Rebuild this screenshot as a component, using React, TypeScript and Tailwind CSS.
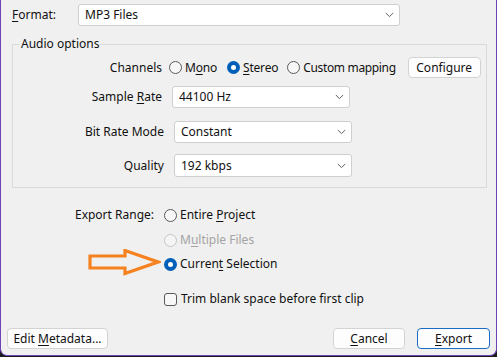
import React from "react";

const U = ({ children }: { children: React.ReactNode }) => <span className="underline underline-offset-2">{children}</span>;

function Chevron() {
  return (
    <svg width="9" height="6" viewBox="0 0 9 6" className="shrink-0">
      <path d="M0.8 1 L4.5 4.6 L8.2 1" fill="none" stroke="#5f5f5f" strokeWidth="1" />
    </svg>
  );
}

function Combo({ value, className }: { value: string; className: string }) {
  return (
    <div className={"flex items-center justify-between bg-white border border-[#cfcfcf] rounded-[3px] pl-[6px] pr-[5px] shrink-0 " + className}>
      <span>{value}</span>
      <Chevron />
    </div>
  );
}

function Radio({ checked, disabled }: { checked?: boolean; disabled?: boolean }) {
  if (checked) {
    return (
      <span className="w-[13px] h-[13px] rounded-full bg-[#005fb8] flex items-center justify-center shrink-0">
        <span className="w-[5px] h-[5px] rounded-full bg-white" />
      </span>
    );
  }
  return (
    <span
      className={
        "w-[13px] h-[13px] rounded-full border shrink-0 " +
        (disabled ? "border-[#c5c5c5] bg-[#f5f5f5]" : "border-[#5a5a5a] bg-[#f7f7f7]")
      }
    />
  );
}

function Button({ children, primary, className }: { children: React.ReactNode; primary?: boolean; className: string }) {
  return (
    <div
      className={
        "flex items-center justify-center bg-[#fdfdfd] rounded-[4px] border shrink-0 whitespace-nowrap " +
        (primary ? "border-[#1a6cc4]" : "border-[#d3d3d3]") +
        " " +
        className
      }
    >
      <span>{children}</span>
    </div>
  );
}

export default function App() {
  return (
    <div className="w-[497px] h-[357px] bg-[#1b1b1b]" style={{ fontFamily: '"Noto Sans", "Open Sans", sans-serif' }}>
      <div className="relative w-[497px] h-[356px] bg-[#f0f0f0] border-l border-r border-b border-[#6e44b4] rounded-b-[7px] flex flex-col text-[12px] text-[#111] leading-[16px] whitespace-nowrap">
        {/* Format row */}
        <div className="flex items-center mt-[4px] h-[22px]">
          <span className="ml-[11px] w-[66px]">
            <U>F</U>ormat:
          </span>
          <Combo value="MP3 Files" className="w-[322px] h-[22px]" />
        </div>

        {/* Audio options */}
        <fieldset className="mt-[11px] ml-[11px] w-[475px] border border-[#dadada] pb-[10px]">
          <legend className="ml-[7px] px-[1px] leading-[14px]">Audio options</legend>
          <div className="flex items-center h-[21px] mt-[6px]">
            <span className="w-[149px] text-right shrink-0">Channels</span>
            <span className="ml-[7px] flex items-center tracking-[-0.2px]">
              <Radio />
              <span className="ml-[3px]">
                M<U>o</U>no
              </span>
            </span>
            <span className="ml-[10px] flex items-center tracking-[-0.2px]">
              <Radio checked />
              <span className="ml-[3px]">
                <U>S</U>tereo
              </span>
            </span>
            <span className="ml-[9px] flex items-center tracking-[-0.35px]">
              <Radio />
              <span className="ml-[3px]">Custom mapping</span>
            </span>
            <Button className="ml-[12px] w-[73px] h-[21px]">Configure</Button>
          </div>
          <div className="flex items-center h-[22px] mt-[8px]">
            <span className="w-[149px] text-right">
              Sample <U>R</U>ate
            </span>
            <Combo value="44100 Hz" className="ml-[10px] w-[178px] h-[22px]" />
          </div>
          <div className="flex items-center h-[22px] mt-[13px]">
            <span className="w-[151px] text-right">Bit Rate Mode</span>
            <Combo value="Constant" className="ml-[10px] w-[178px] h-[22px]" />
          </div>
          <div className="flex items-center h-[23px] mt-[11px]">
            <span className="w-[151px] text-right">Quality</span>
            <Combo value="192 kbps" className="ml-[10px] w-[178px] h-[23px]" />
          </div>
        </fieldset>

        {/* Export range */}
        <div className="flex items-center h-[16px] mt-[19px]">
          <span className="w-[153px] text-right">Export Range:</span>
          <span className="ml-[10px] flex items-center">
            <Radio />
            <span className="ml-[3px]">
              Entire <U>P</U>roject
            </span>
          </span>
        </div>
        <div className="flex items-center h-[16px] mt-[9px]">
          <span className="ml-[163px] flex items-center">
            <Radio disabled />
            <span className="ml-[3px] text-[#a3a3a3]">
              M<U>u</U>ltiple Files
            </span>
          </span>
        </div>
        <div className="relative flex items-center h-[16px] mt-[8px]">
          <span className="ml-[163px] flex items-center">
            <Radio checked />
            <span className="ml-[3px]">
              Curren<U>t</U> Selection
            </span>
          </span>
          <svg className="absolute left-[86px] top-[-7px]" width="74" height="30" viewBox="0 0 74 30">
            <polygon
              points="3,7 38,7 38,1.5 71,13 38,24.5 38,19 3,19"
              fill="none"
              stroke="#f5821f"
              strokeWidth="3.2"
              strokeLinejoin="miter"
            />
          </svg>
        </div>
        <div className="flex items-center h-[16px] mt-[19px]">
          <span className="ml-[163px] flex items-center">
            <span className="w-[13px] h-[13px] rounded-[3px] border border-[#5a5a5a] bg-[#f7f7f7] shrink-0" />
            <span className="ml-[4px]">Trim blank space before first clip</span>
          </span>
        </div>

        {/* Bottom buttons */}
        <div className="flex items-center mt-auto mb-[6px] h-[21px]">
          <Button className="ml-[6px] w-[101px] h-[21px]">
            Edit <U>M</U>etadata...
          </Button>
          <div className="flex-1" />
          <Button className="w-[72px] h-[21px]">
            <U>C</U>ancel
          </Button>
          <Button primary className="ml-[12px] mr-[6px] w-[73px] h-[21px]">
            <U>E</U>xport
          </Button>
        </div>
      </div>
    </div>
  );
}
